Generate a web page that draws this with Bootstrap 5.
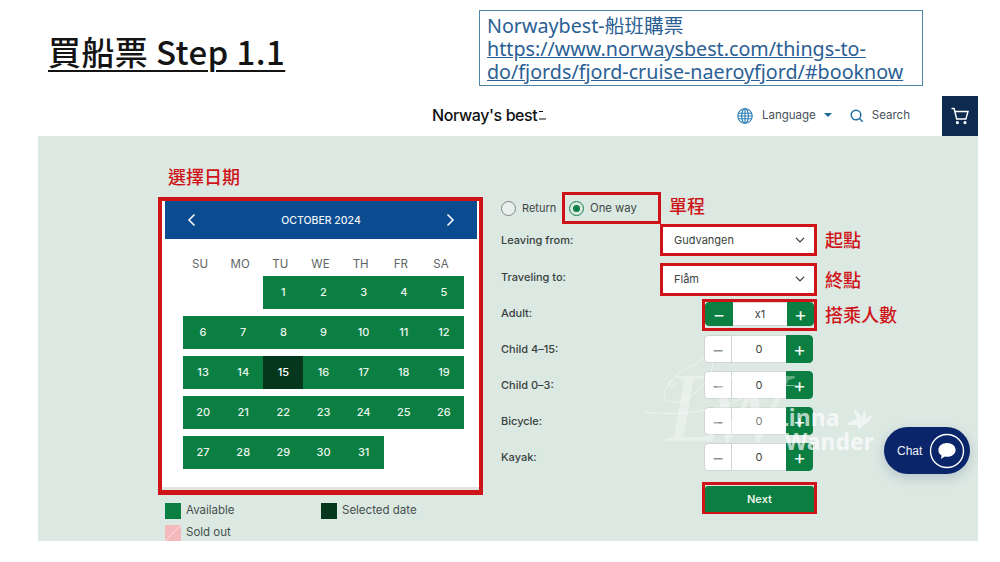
<!DOCTYPE html>
<html lang="zh-Hant">
<head>
<meta charset="utf-8">
<title>買船票 Step 1.1</title>
<link href="https://cdn.jsdelivr.net/npm/bootstrap@5.3.0/dist/css/bootstrap.min.css" rel="stylesheet">
<style>
:root{--red:#cf1419;--grn:#0b7e41;--cjk:"Noto Sans CJK TC","Noto Sans",sans-serif;--ui:"Inter","Noto Sans",sans-serif;}
html,body{height:562px;overflow:hidden;background:#fff;}
body{font-family:var(--ui);font-size:11px;color:#3c4743;}
.slidetop{height:96px;}
.deck-title{margin:30px 0 0 48px;font-family:var(--cjk);font-size:33px;line-height:42px;font-weight:500;letter-spacing:.4px;color:#141414;text-decoration:underline;text-decoration-thickness:2px;text-underline-offset:5px;white-space:nowrap;height:42px;}
.note-box{margin:10px 77px 0 auto;width:444px;height:76px;border:1px solid #4f86a6;padding:3px 7px;font-family:"Noto Sans","Noto Sans CJK TC",sans-serif;font-size:19.7px;line-height:23px;color:#2b6094;font-weight:400;white-space:nowrap;}
.note-box a{color:#2b6094;}
.sitebar{margin-left:38px;width:940px;height:40px;padding-left:394px!important;flex-wrap:nowrap;justify-content:flex-start;}
.brand-word{font-size:16px;font-weight:500;color:#111;letter-spacing:-.4px;display:flex;align-items:center;margin-bottom:2px;}
.brand-word svg{margin-left:1px;}
.nav-txt{font-size:11.5px;color:#47525a;}
.nav-txt.dropdown-toggle::after{margin-left:8px;color:#1a6a9c;border-top-width:4px;border-left-width:4px;border-right-width:4px;vertical-align:2px;}
.cart-cell{width:36px;height:40px;background:#0c2b4e;}
.mint-panel{position:relative;margin-left:38px;width:940px;height:405px;background:#dce8e2;overflow:hidden;padding-left:120px;}
.cal-col{width:325px;margin-right:18px;}
.red-note{font-family:var(--cjk);font-size:18px;line-height:24px;color:var(--red);font-weight:500;white-space:nowrap;}
.date-note{margin:28px 0 9px 10px;}
.note-up{margin-bottom:6px;}
.note-up1{margin-bottom:2px;}
.cal-box{height:298px;border:4px solid var(--red);background:#fff;border-bottom-width:5px;}
.cal-inner{height:100%;border-bottom:3px solid #e0e5e2;}
.cal-head{height:38px;margin:0 2px 0 3px;background:#0b4b8f;color:#eef4fa;font-size:10.5px;font-weight:500;padding:0 22px;}
.cal-head span{margin-top:1px;}
.dow{margin:13px 0 0 18px;width:281px;display:grid;grid-template-columns:repeat(7,1fr);text-align:center;font-size:11.5px;line-height:24px;color:#5c6663;}
.days{margin:0 0 0 21px;width:281px;display:grid;grid-template-columns:repeat(7,1fr);grid-auto-rows:33px;row-gap:7px;}
.dcell{display:flex;align-items:center;justify-content:center;background:var(--grn);color:#e9f6ee;font-weight:500;font-size:11px;}
.dcell.sel{background:#05371c;color:#fff;}
.dcell.none{background:transparent;}
.legend{margin:7px 0 0 7px;display:grid;grid-template-columns:156px 156px;row-gap:5px;font-size:11.5px;color:#46504c;}
.swatch{width:16px;height:16px;margin-right:5px;flex:none;}
.sw-av{background:var(--grn);}
.sw-sel{background:#05371c;}
.sw-sold{background:linear-gradient(135deg,#f3b9bd 47%,#f9dcdc 47%,#f9dcdc 53%,#f3b9bd 53%);}
.form-col{margin-top:56px;width:420px;}
.frow{display:flex;align-items:center;height:32px;}
.frow-sm{height:28px;margin-top:8px;}
.frow-first{margin-top:4px;}
.flab{width:159px;flex:none;font-size:11px;font-weight:500;color:#38423e;}
.flab-wide{width:203px;}
.flab-adult{width:201px;}
.flab-up{margin-bottom:4px;}
.radio-plain{width:61px;flex:none;gap:6px;}
.rdot{width:15px;height:15px;border-radius:50%;border:1.5px solid #7d8784;flex:none;background:#e9f0ec;}
.rdot.on{border-color:#0f8048;background:#dce8e2;display:flex;align-items:center;justify-content:center;}
.rdot.on::before{content:"";width:7px;height:7px;border-radius:50%;background:#0f8048;}
.hl-box{border:3px solid var(--red);}
.hl-radio{width:99px;height:32px;gap:6px;padding-left:4px;font-size:11.3px;}
.hl-select{width:157px;height:32px;background:#fff;}
.hl-select.tall{height:33px;}
.tselect{height:100%;border:0;border-radius:0;padding:0 0 0 11px;font-size:11px;color:#3a4441;font-family:var(--ui);background-size:12px 10px;background-position:right 8px center;box-shadow:none;}
.mt-seven{margin-top:7px;}
.hl-step{width:115px;height:32px;padding-bottom:2px;}
.stepper{width:109px;height:100%;flex-wrap:nowrap;}
.stepper .sbtn{width:28px;padding:0;border:1px solid #cfd4d1;background:#fff;color:#8a918e;font-size:19px;line-height:1;display:flex;align-items:center;justify-content:center;border-radius:4px 0 0 4px;}
.stepper .sbtn.plus{width:27px;background:var(--grn);border-color:var(--grn);color:#f2faf5;border-radius:0 4px 4px 0;}
.stepper .sbtn.on{background:var(--grn);border-color:var(--grn);color:#f2faf5;}
.stepper .snum{flex:1;padding:0;justify-content:center;border:1px solid #d7dbd8;border-width:1px 0;border-radius:0;background:#fff;font-size:11px;color:#3c4441;}
.hl-next{width:115px;height:32px;margin-top:11px;margin-left:201px;}
.next-btn{width:100%;height:26px;margin-top:1px;padding:0;background:var(--grn);border:0;border-radius:3px 3px 0 0;color:#eaf6ef;font-size:11px;font-weight:600;}
.watermark{position:absolute;left:0;top:0;width:940px;height:405px;pointer-events:none;z-index:6;}
.wm-script{position:absolute;left:628px;top:222px;font-family:"Liberation Serif",serif;font-style:italic;font-size:100px;line-height:100px;color:rgba(255,255,255,.34);white-space:nowrap;letter-spacing:-14px;}
.wm-name{position:absolute;left:738px;top:269px;font-family:"Noto Sans",sans-serif;font-weight:700;font-size:23px;line-height:24px;color:rgba(255,255,255,.7);}
.wm-name span{display:block;}
.wm-name .second{margin-left:9px;}
.wm-art{position:absolute;left:600px;top:220px;}
.wm-bird{position:absolute;left:807px;top:271px;}
.chat-pill{position:absolute;left:846px;top:291px;width:86px;height:47px;border-radius:24px;background:#0a2569;box-shadow:0 4px 12px rgba(10,37,105,.18);color:#eef1f8;font-family:"Liberation Sans",sans-serif;font-size:12px;padding-left:13px;}
.chat-ring{margin-left:7px;}
</style>
</head>
<body>
<div class="d-flex slidetop">
  <h1 class="deck-title">買船票 Step 1.1</h1>
  <div class="note-box">Norwaybest-船班購票<br><a href="#">https://www.norwaysbest.com/things-to-<br>do/fjords/fjord-cruise-naeroyfjord/#booknow</a></div>
</div>

<nav class="navbar sitebar p-0">
  <span class="brand-word">Norway's best<svg width="9" height="12" viewBox="0 0 9 12"><path d="M1 2.5h4M1 10h7" stroke="#111" stroke-width="1.2" fill="none"/></svg></span>
  <div class="d-flex align-items-center ms-auto">
    <svg width="16" height="16" viewBox="0 0 16 16" fill="none" stroke="#2b7db5" stroke-width="1.1" style="margin-right:9px"><circle cx="8" cy="8" r="7.2"/><ellipse cx="8" cy="8" rx="3.4" ry="7.2"/><path d="M8 .8v14.4M1.4 5.2h13.2M1.4 10.8h13.2M.8 8h14.4"/></svg>
    <span class="nav-txt dropdown-toggle">Language</span>
    <svg width="14" height="14" viewBox="0 0 14 14" fill="none" stroke="#1e6ea6" stroke-width="1.4" style="margin-left:18px;margin-right:8px"><circle cx="6" cy="6" r="4.8"/><path d="M9.5 9.5l3.2 3.2"/></svg>
    <span class="nav-txt">Search</span>
    <div class="cart-cell d-flex align-items-center justify-content-center" style="margin-left:32px">
      <svg width="20" height="20" viewBox="0 0 20 20" fill="none" stroke="#fff" stroke-width="1.4"><path d="M1.5 2.5h2.6l2.6 10.5h9.2L18 5.5H4.8"/><circle cx="7.4" cy="16.6" r=".9" fill="#fff"/><circle cx="15" cy="16.6" r=".9" fill="#fff"/></svg>
    </div>
  </div>
</nav>

<main class="mint-panel d-flex">
  <section class="cal-col">
    <div class="red-note date-note">選擇日期</div>
    <div class="cal-box">
      <div class="cal-inner">
        <div class="cal-head d-flex align-items-center justify-content-between">
          <svg width="10" height="14" viewBox="0 0 10 14" fill="none" stroke="#fff" stroke-width="1.5"><path d="M7.5 1.5L2 7l5.5 5.5"/></svg>
          <span>OCTOBER 2024</span>
          <svg width="10" height="14" viewBox="0 0 10 14" fill="none" stroke="#fff" stroke-width="1.5"><path d="M2.5 1.5L8 7l-5.5 5.5"/></svg>
        </div>
        <div class="dow"><span>SU</span><span>MO</span><span>TU</span><span>WE</span><span>TH</span><span>FR</span><span>SA</span></div>
        <div class="days">
          <div class="dcell none"></div><div class="dcell none"></div>
          <div class="dcell">1</div><div class="dcell">2</div><div class="dcell">3</div><div class="dcell">4</div><div class="dcell">5</div>
          <div class="dcell">6</div><div class="dcell">7</div><div class="dcell">8</div><div class="dcell">9</div><div class="dcell">10</div><div class="dcell">11</div><div class="dcell">12</div>
          <div class="dcell">13</div><div class="dcell">14</div><div class="dcell sel">15</div><div class="dcell">16</div><div class="dcell">17</div><div class="dcell">18</div><div class="dcell">19</div>
          <div class="dcell">20</div><div class="dcell">21</div><div class="dcell">22</div><div class="dcell">23</div><div class="dcell">24</div><div class="dcell">25</div><div class="dcell">26</div>
          <div class="dcell">27</div><div class="dcell">28</div><div class="dcell">29</div><div class="dcell">30</div><div class="dcell">31</div>
        </div>
      </div>
    </div>
    <div class="legend">
      <div class="d-flex align-items-center"><span class="swatch sw-av"></span>Available</div>
      <div class="d-flex align-items-center"><span class="swatch sw-sel"></span>Selected date</div>
      <div class="d-flex align-items-center"><span class="swatch sw-sold"></span>Sold out</div>
    </div>
  </section>

  <section class="form-col">
    <div class="frow">
      <div class="d-flex align-items-center radio-plain"><span class="rdot"></span><span>Return</span></div>
      <div class="d-flex align-items-center hl-box hl-radio"><span class="rdot on"></span><span>One way</span></div>
      <span class="red-note ms-2 note-up">單程</span>
    </div>
    <div class="frow">
      <span class="flab">Leaving from:</span>
      <div class="hl-box hl-select"><select class="form-select tselect"><option>Gudvangen</option></select></div>
      <span class="red-note ms-2 note-up1">起點</span>
    </div>
    <div class="frow mt-seven">
      <span class="flab flab-up">Traveling to:</span>
      <div class="hl-box hl-select tall"><select class="form-select tselect"><option>Flåm</option></select></div>
      <span class="red-note ms-2">終點</span>
    </div>
    <div class="frow mt-1">
      <span class="flab flab-adult flab-up">Adult:</span>
      <div class="hl-box hl-step">
        <div class="input-group stepper"><button class="btn sbtn on">−</button><span class="input-group-text snum">x1</span><button class="btn sbtn plus">+</button></div>
      </div>
      <span class="red-note ms-2 note-up1">搭乘人數</span>
    </div>
    <div class="frow frow-sm frow-first">
      <span class="flab flab-wide">Child 4–15:</span>
      <div class="input-group stepper"><button class="btn sbtn">−</button><span class="input-group-text snum">0</span><button class="btn sbtn plus">+</button></div>
    </div>
    <div class="frow frow-sm">
      <span class="flab flab-wide">Child 0–3:</span>
      <div class="input-group stepper"><button class="btn sbtn">−</button><span class="input-group-text snum">0</span><button class="btn sbtn plus">+</button></div>
    </div>
    <div class="frow frow-sm">
      <span class="flab flab-wide">Bicycle:</span>
      <div class="input-group stepper"><button class="btn sbtn">−</button><span class="input-group-text snum">0</span><button class="btn sbtn plus">+</button></div>
    </div>
    <div class="frow frow-sm">
      <span class="flab flab-wide">Kayak:</span>
      <div class="input-group stepper"><button class="btn sbtn">−</button><span class="input-group-text snum">0</span><button class="btn sbtn plus">+</button></div>
    </div>
    <div class="hl-box hl-next"><button class="btn next-btn">Next</button></div>
  </section>

  <div class="chat-pill d-flex align-items-center">
    <span>Chat</span>
    <svg class="chat-ring" width="36" height="36" viewBox="0 0 36 36" fill="none"><circle cx="18" cy="18" r="16.5" stroke="#fff" stroke-width="1.4"/><path d="M18 10c-5 0-8.6 3-8.6 7 0 2.4 1.2 4.3 3.2 5.5l-.6 3.5 3.8-2.4c.7.1 1.5.2 2.2.2 5 0 8.6-3 8.6-6.8S23 10 18 10z" fill="#fff"/></svg>
  </div>

  <div class="watermark">
    <span class="wm-script">LW</span>
    <svg class="wm-art" width="240" height="110" viewBox="0 0 240 110" fill="none" stroke="rgba(255,255,255,.5)" stroke-width="1"><path d="M7 56c30 4 70 0 98-14 20-10 36-14 56-12"/><path d="M58 8c10-10 22-6 14 10-8 18-30 34-44 26-8-8 10-30 30-36"/><circle cx="34" cy="28" r="3"/><path d="M84 62c-8 6-10 14-2 16 8 0 8-10 2-14"/></svg>
    <svg class="wm-bird" width="30" height="24" viewBox="0 0 30 24" fill="rgba(255,255,255,.55)"><path d="M1 17c5-3 8-5 11-5L8 2c4 2 7 5 9 9l2-8c2 3 2 6 2 8l7-3c-2 5-6 9-11 11l-3 4-2-5c-4 0-8 0-11-1z"/></svg>
    <div class="wm-name"><span>Linna</span><span class="second">Wander</span></div>
  </div>
</main>
<script src="https://cdn.jsdelivr.net/npm/bootstrap@5.3.0/dist/js/bootstrap.bundle.min.js"></script>
</body>
</html>
